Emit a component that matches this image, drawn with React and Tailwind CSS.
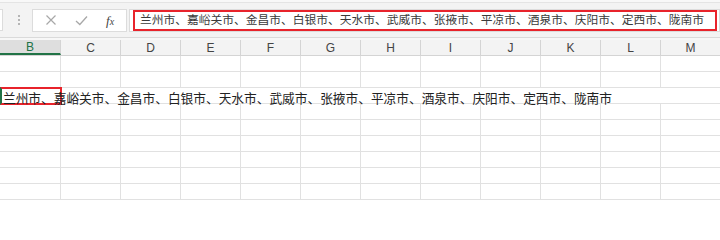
import React from "react";

const cols = ["B", "C", "D", "E", "F", "G", "H", "I", "J", "K", "L", "M"];
const text =
  "兰州市、嘉峪关市、金昌市、白银市、天水市、武威市、张掖市、平凉市、酒泉市、庆阳市、定西市、陇南市";
const rows = [0, 1, 2, 3, 4, 5, 6, 7, 8];

function colWidth(i) {
  return i === 0 ? "w-[61px]" : "w-[60px]";
}

export default function App() {
  return (
    <div
      className="w-[720px] h-[201px] overflow-hidden bg-white"
      style={{ fontFamily: '"Noto Sans", "Noto Sans CJK SC", sans-serif' }}
    >
      {/* formula bar */}
      <div className="h-[3px] bg-[#f8f8f8] border-b border-[#e4e4e4]" />
      <div className="flex items-center h-[35px] bg-[#f3f3f3] border-b border-[#dadada]">
        <div className="w-[3px] h-[22px] bg-white border border-l-0 border-[#dcdcdc]" />
        <div className="ml-[15px] flex flex-col gap-[2px]">
          <span className="w-[2px] h-[2px] bg-[#b5b5b5]" />
          <span className="w-[2px] h-[2px] bg-[#b5b5b5]" />
          <span className="w-[2px] h-[2px] bg-[#b5b5b5]" />
        </div>
        <div className="ml-[12px] w-[95px] h-[23px] bg-white border border-[#dcdcdc] flex items-center">
          <svg className="ml-[12px]" width="12" height="12" viewBox="0 0 12 12">
            <path d="M1.5 1.5 L10.5 10.5 M10.5 1.5 L1.5 10.5" stroke="#a8a8a8" strokeWidth="1.2" fill="none" />
          </svg>
          <svg className="ml-[18px]" width="13" height="11" viewBox="0 0 13 11">
            <path d="M1 6 L4.8 9.5 L12 1.5" stroke="#a8a8a8" strokeWidth="1.3" fill="none" />
          </svg>
          <span
            className="ml-[18px] text-[13px] italic text-[#444] leading-none"
            style={{ fontFamily: '"Liberation Serif", serif' }}
          >
            f<span className="text-[10px]">x</span>
          </span>
        </div>
        <div className="ml-[2px] flex-1 h-[23px] bg-white border border-[#dcdcdc] pl-[3px] pr-[2px] flex items-center">
          <div className="w-full h-[21px] border-2 border-[#e8232b] flex items-center pl-[5px]">
            <span className="text-[11.75px] text-[#3a3a3a] whitespace-nowrap leading-none">{text}</span>
          </div>
        </div>
      </div>
      <div className="h-[2px] bg-[#f7f7f7]" />

      {/* column headers */}
      <div className="flex h-[16px] bg-[#f3f3f3] border-b border-[#d4d4d4]">
        {cols.map((c, i) => (
          <div
            key={c}
            className={
              colWidth(i) +
              " shrink-0 flex items-center justify-center border-r border-[#d4d4d4] text-[12px] leading-none " +
              (i === 0
                ? "bg-[#dedede] text-[#217346] border-b-2 border-b-[#217346]"
                : "text-[#444]")
            }
            style={{ fontFamily: '"Liberation Sans", sans-serif' }}
          >
            {c}
          </div>
        ))}
      </div>

      {/* grid */}
      {rows.map((r) =>
        r === 2 ? (
          <div key={r} className="relative flex items-start pt-[4px] h-[16px] border-b border-[#e1e1e1]">
            <div className="absolute left-0 top-[-1px] w-[62px] h-[18px] border-2 border-[#e8232b] border-l-[#217346]" />
            <span className="relative pl-[3px] text-[12.7px] text-[#222] whitespace-nowrap leading-none">
              {text}
            </span>
          </div>
        ) : (
          <div key={r} className="flex h-[16px] border-b border-[#e1e1e1]">
            {cols.map((c, i) => (
              <div key={c} className={colWidth(i) + " shrink-0 border-r border-[#e1e1e1]"} />
            ))}
          </div>
        )
      )}
    </div>
  );
}
